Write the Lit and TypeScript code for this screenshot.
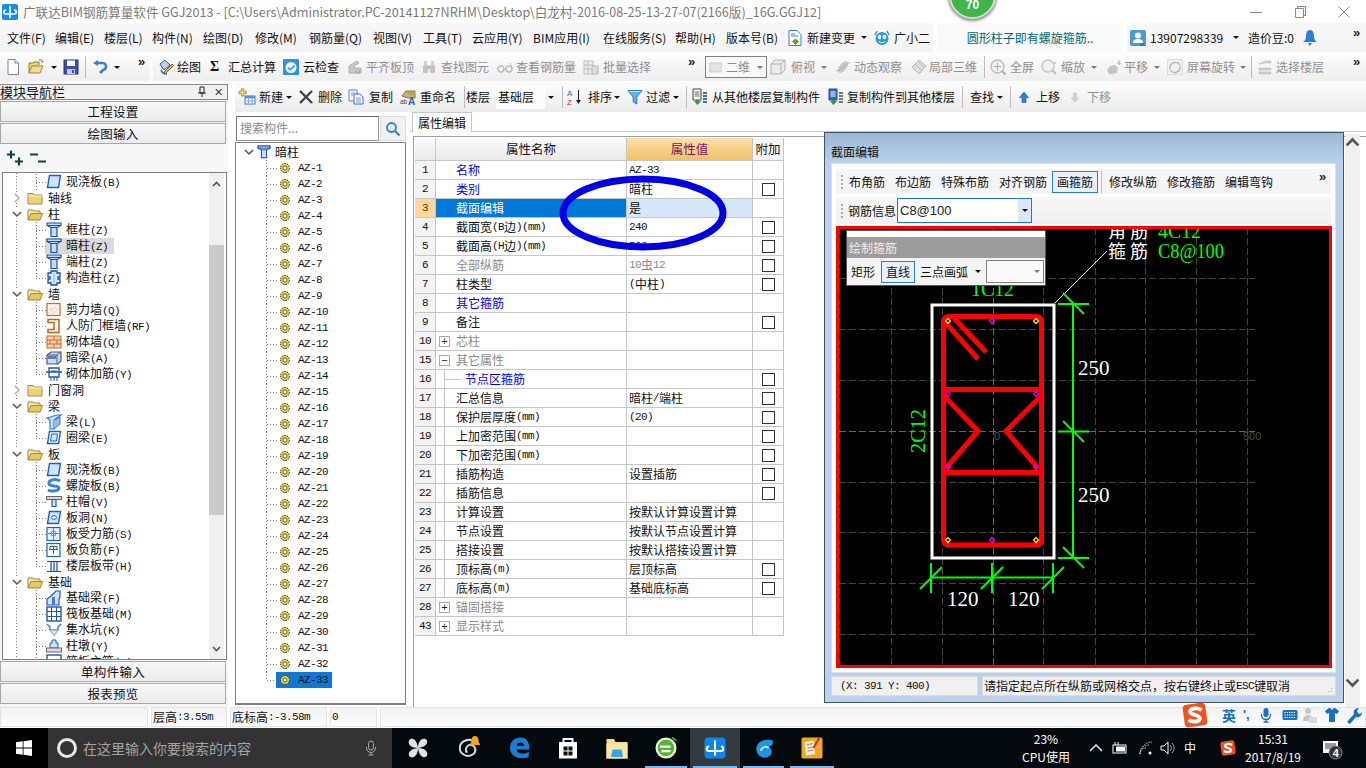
import { LitElement, html, css, svg, nothing, TemplateResult } from "lit";
import { customElement } from "lit/decorators.js";

type Cell = [number, string | TemplateResult];

const B = "#1c5fc0";
const ic = (c: unknown, cls = "") =>
  html`<svg class="i ${cls}" viewBox="0 0 16 16">${c}</svg>`;

/* ---------- toolbar icons ---------- */
const icons: Record<string, TemplateResult> = {
  new: ic(svg`<path d="M3 .5h7l3.5 3.5v11.5H3z" fill="#fff" stroke="#7d8794"/><path d="M10 .5V4h3.5" fill="#e8ebef" stroke="#7d8794"/>`),
  open: ic(svg`<path d="M1 14V4h4l1-1h5v3" fill="#eccf7e" stroke="#9a7a2a"/><path d="M1 14l3-7h11l-3 7z" fill="#f5dd93" stroke="#a5832f"/><path d="M11 1c2-.8 3.500 0 4 2l-1.500-.5" fill="none" stroke="#3b7d2e"/>`),
  save: ic(svg`<rect x="1" y="1" width="14" height="14" fill="#3f4fa8" stroke="#2b3580"/><rect x="4" y="1.500" width="8" height="5.500" fill="#fff"/><rect x="4" y="10" width="8" height="5" fill="#c5cbe6"/><rect x="9" y="11" width="2" height="3" fill="#3f4fa8"/>`),
  undo: ic(svg`<path d="M5 4h5a3.500 3.500 0 0 1 1 7l-3 3" fill="none" stroke="#3c80cf" stroke-width="2.600"/><path d="M1 4l5-3v6z" fill="#3c80cf"/>`),
  draw: ic(svg`<path d="M2 5l5-4 5 5-6 5z" fill="#bcd2ec" stroke="#36568f"/><path d="M6 13l8-8 1.500 1.500-8 8z" fill="#e4b94a" stroke="#7a6224"/><path d="M3 11c1 3 3 4 6 4" stroke="#2e66b8" fill="none" stroke-width="1.500"/>`),
  cloud: ic(svg`<rect x="0" y="0" width="16" height="16" rx="1" fill="#2f93dd"/><circle cx="8" cy="8.500" r="5.500" fill="#eaf5fd"/><path d="M5 8.500l2.200 2.200L11.500 6.500" fill="none" stroke="#2f93dd" stroke-width="1.600"/>`),
  flat: ic(svg`<path d="M2 14V7l8-5 2 2-5 3v2h7v5z" fill="#c9c9c9" stroke="#b0b0b0"/><path d="M9 11v4M12 11v4" stroke="#9e9e9e"/>`),
  bino: ic(svg`<rect x="2" y="6" width="5" height="8" rx="1" fill="#c4c4c4"/><rect x="9" y="6" width="5" height="8" rx="1" fill="#c4c4c4"/><rect x="3" y="2" width="3" height="4" fill="#d4d4d4"/><rect x="10" y="2" width="3" height="4" fill="#d4d4d4"/><rect x="7" y="7" width="2" height="3" fill="#b4b4b4"/>`),
  glasses: ic(svg`<circle cx="4" cy="10" r="3" fill="none" stroke="#bbb" stroke-width="1.400"/><circle cx="12" cy="10" r="3" fill="none" stroke="#bbb" stroke-width="1.400"/><path d="M7 10h2M15 9L13 4" stroke="#bbb" fill="none"/>`),
  batch: ic(svg`<path d="M1 2h9v13H1zM1 6h9M1 10h9M5 2v13" fill="#eee" stroke="#bdbdbd"/><path d="M9 7h6v8H9z" fill="#ddd" stroke="#b5b5b5"/>`),
  box2d: ic(svg`<rect x="1" y="3" width="14" height="11" fill="#e4e4e4" stroke="#c4c4c4"/>`),
  cube: ic(svg`<path d="M1 5h10v10H1zM1 5l4-4h10v10l-4 4M11 5l4-4" fill="#ececec" stroke="#b0b0b0"/>`),
  orbit: ic(svg`<ellipse cx="8" cy="8" rx="3.500" ry="7" transform="rotate(40 8 8)" fill="#c6c6c6"/><path d="M1 12C5 11 11 7 15 3" stroke="#b0b0b0" fill="none"/>`),
  part3d: ic(svg`<path d="M8 1l7 6-7 8-7-7z" fill="#e0e0e0" stroke="#b4b4b4"/><path d="M4 5l7 7M8 3l5 6" stroke="#bcbcbc"/>`),
  full: ic(svg`<circle cx="7.500" cy="7.500" r="6.500" fill="#f3f3f3" stroke="#bdbdbd" stroke-width="1.400"/><path d="M7.500 3.500v8M3.500 7.500h8" stroke="#aaa"/><path d="M12 12l3.500 3.500" stroke="#aaa" stroke-width="2"/>`),
  zoom: ic(svg`<circle cx="7" cy="7" r="6" fill="#f0f0f0" stroke="#c8c8c8" stroke-width="1.400"/><path d="M11 11l4 4" stroke="#c0c0c0" stroke-width="2"/><path d="M13 4h2M14 3v2" stroke="#bbb"/>`),
  pan: ic(svg`<path d="M2 11l3-4 5-1 3 3-1 5-5 1H4z" fill="#c6c6c6"/><path d="M12 4h4M14 1v5" stroke="#b4b4b4"/>`),
  rotate: ic(svg`<rect x="0.500" y="0.500" width="15" height="15" fill="#f0f0f0" stroke="#ddd"/><path d="M3 10a5.500 5.500 0 0 1 10-4M13 7a5.500 5.500 0 0 1-10 4" fill="none" stroke="#b4b4b4" stroke-width="1.300"/>`),
  selfloor: ic(svg`<path d="M2 5l6-3h6v2H8L5 5zM2 9h12v2H2zM2 13h12v2H2z" fill="#cfcfcf" stroke="#bcbcbc" stroke-width=".6"/>`),
  addnew: ic(svg`<path d="M3 1h3v3h3v3H6v3H3V7H0V4h3z" transform="translate(0 -1) scale(.8)" fill="#f1d86a" stroke="#a48a20"/><rect x="6" y="7" width="10" height="8" fill="#fff" stroke="#3e78c4"/><rect x="6" y="7" width="10" height="2.500" fill="#5a94dc"/><path d="M9.500 9.500v5M13 9.500v5M6 12h10" stroke="#7ca6da"/>`),
  del: ic(svg`<path d="M2 2l12 12M14 2L2 14" stroke="#444" stroke-width="2.400"/>`),
  copy: ic(svg`<path d="M1 1h8v11H1z" fill="#f4f8fd" stroke="#5a86bd"/><path d="M6 5h6l3 3v7H6z" fill="#fff" stroke="#3f6fb2"/><path d="M3 4h4M3 6h2M8 9h5M8 11h5M8 13h5" stroke="#6f95c6"/>`),
  rename: ic(svg`<path d="M2 7l4-5h9v7H8z" fill="#c9b266" stroke="#8a7a3a"/><path d="M7 3l5 3M10 2.500l4 3" stroke="#7aa55e"/><text x="0" y="15" font-size="6.500" font-family="Liberation Sans" fill="#444">ab</text><text x="8" y="16" font-size="10" font-weight="700" font-family="Liberation Sans" fill="#2360b8">A</text>`),
  sort: ic(svg`<text x="0" y="7" font-size="8" font-family="Liberation Sans" fill="#2d6cc0">A</text><text x="0" y="15.500" font-size="8" font-family="Liberation Sans" fill="#b03030">Z</text><path d="M11.500 1v13" stroke="#222"/><path d="M9 11l2.500 4 2.500-4z" fill="#222"/>`),
  filter: ic(svg`<path d="M1 1.500h14L9.800 8v7L6.200 13V8z" fill="#65b0ea" stroke="#2877c2"/><path d="M2.500 2.500h11" stroke="#cde6fa"/>`),
  fromfl: ic(svg`<path d="M1 0h8v11H1z" fill="#fff" stroke="#444"/><path d="M2.500 3h5M2.500 5h5M2.500 7h5" stroke="#666"/><path d="M11 4h4M11 7h4M11 10h4M11 13h4" stroke="#3b6fae" stroke-width="1.800"/><path d="M2 12h2v-1h3v1h2l-3.500 4z" fill="#2f9a3b"/>`),
  tofl: ic(svg`<path d="M1 0h8v11H1z" fill="#2f6fc6" stroke="#234f8f"/><path d="M2.500 3h5M2.500 5h5M2.500 7h5" stroke="#fff"/><path d="M11 4h4M11 7h4M11 10h4M11 13h4" stroke="#777" stroke-width="1.800"/><path d="M2 12h2v-1h3v1h2l-3.500 4z" fill="#2f9a3b"/>`),
  up: ic(svg`<path d="M8 3l4.500 5.500h-2.500v5H6v-5H3.500z" fill="#2e7fd6" stroke="#1c5fa8" stroke-width=".6"/>`),
  down: ic(svg`<path d="M8 14l4.500-5.500h-2.500v-5H6v5H3.500z" fill="#cfcfcf"/>`),
  doc: ic(svg`<path d="M2 .5h8l4 4v11H2z" fill="#fff" stroke="#3b7fd0"/><path d="M4 4h4M4 6h7" stroke="#3b7fd0"/><path d="M8.500 8.500l3.500 3-3.500 3.500-3.500-3.500z" fill="#5aa52a"/>`),
  gxe: ic(svg`<circle cx="8" cy="8.500" r="6.500" fill="#2a9be6"/><path d="M1 5L3 1M15 5l-2-4" stroke="#2a9be6" stroke-width="1.500"/><ellipse cx="5.500" cy="7" rx="1.800" ry="2.200" fill="#fff"/><ellipse cx="10.500" cy="7" rx="1.800" ry="2.200" fill="#fff"/><path d="M5 11.500c2 1.500 4 1.500 6 0" stroke="#fff" fill="none"/>`),
  user: ic(svg`<rect width="16" height="16" rx="2" fill="#4d9ad8"/><path d="M10 16V9l6 7z" fill="#3677ab"/><circle cx="8" cy="5.500" r="3" fill="#fff"/><path d="M3 13c0-3 2-4 5-4s5 1 5 4z" fill="#fff"/>`),
  bell: ic(svg`<path d="M8 0c3 0 4 3 4 6 0 3 1 5 3 6H1c2-1 3-3 3-6 0-3 1-6 4-6z" fill="#2a7fdc"/><path d="M6 13h4l-2 3z" fill="#2a7fdc"/>`),
};

/* ---------- tree icons ---------- */
const treeI: Record<string, TemplateResult> = {
  plate: ic(svg`<path d="M3.500 1.500h11l-2 12H1.500z" fill="#cfe2f9" stroke="${B}" stroke-width="1.400"/>`),
  ring: ic(svg`<path d="M3.500 1.500h11l-2 12H1.500z" fill="#fff" stroke="${B}" stroke-width="1.400"/><path d="M5.500 4h6l-1 7h-6z" fill="#d5e5f9" stroke="${B}"/>`),
  tcol: ic(svg`<path d="M1 1h14v2.500l-4 2v9H5v-9l-4-2z" fill="#c4dbf6" stroke="#1b4fa5" stroke-width="1.200"/><path d="M1 3.500h14M5 5.500h6" stroke="#1b4fa5"/>`),
  gz: ic(svg`<path d="M5 1h6v2h3v4h-2v2h2v4h-3v2H5v-2H2V9h2V7H2V3h3z" fill="#dbe7f7" stroke="#1b4fa5" stroke-width="1.300"/><path d="M8 3v10" stroke="#8fb0dc"/>`),
  shear: ic(svg`<rect x="1" y="1.500" width="13" height="12" fill="#faf3ec" stroke="#c96a25" stroke-width="1.200"/><path d="M3 11l7-6M3 8l4-3M6 12l6-5" stroke="#aaa" stroke-dasharray="1 1.500"/>`),
  rf: ic(svg`<path d="M2 1.500h11v13H2v-3h6v-7H2z" fill="#fff" stroke="#c2611c" stroke-width="1.500"/>`),
  brick: ic(svg`<rect x="1" y="2" width="14" height="12" fill="#f8d3b4" stroke="#c96a25"/><path d="M1 6h14M1 10h14M8 2v4M4 6v4M11 6v4M8 10v4" stroke="#c96a25"/>`),
  cube: ic(svg`<path d="M1 5l4-3h10v9l-3 3H1z" fill="#cfd9e6" stroke="#3d5f8f" stroke-width="1.200"/><path d="M1 5h10v9M11 5l4-3" fill="none" stroke="#3d5f8f"/><rect x="2" y="6" width="8" height="3" fill="#5a7faf"/>`),
  frame: ic(svg`<path d="M3 2h10v9H3zM0 6h16" fill="#fff" stroke="#1f55b0" stroke-width="1.300"/><path d="M5 11v4M8 11v4M11 11v4M5 5h6" stroke="#1f55b0"/>`),
  beam: ic(svg`<path d="M1 4l10-3h4L8 6v9H4V6z" fill="#cfe2f9" stroke="#2e79cf" stroke-width="1.200"/><path d="M8 6l6-3v7l-6 5" fill="#8fbdee" stroke="#2e79cf"/>`),
  spiral: ic(svg`<path d="M14 3C9 0 2 2 3 6c1 3 10 1 10 4s-7 4-11 2" fill="none" stroke="#2e86dc" stroke-width="3"/>`),
  cap: ic(svg`<rect x="0.500" y="2.500" width="15" height="3" fill="#d8d8d8" stroke="#666"/><path d="M6 5.500h4v7H6z" fill="#cfe2f9" stroke="${B}" stroke-width="1.200"/>`),
  hole: ic(svg`<path d="M3.500 1.500h11l-2 12H1.500z" fill="#cfe2f9" stroke="${B}" stroke-width="1.400"/><ellipse cx="8" cy="7.500" rx="2.500" ry="1.800" fill="#fff" stroke="${B}"/>`),
  srebar: ic(svg`<rect x="1" y="1.500" width="13" height="13" fill="#e6f0fb" stroke="${B}" stroke-width="1.200"/><path d="M7.500 2v12M2 7.500h11" stroke="#4f8bd4"/><circle cx="7.500" cy="7.500" r="2.500" fill="none" stroke="#4f8bd4"/>`),
  nrebar: ic(svg`<rect x="1" y="1.500" width="13" height="13" fill="#fff" stroke="${B}" stroke-width="1.200"/><path d="M3 7.500h9M7.500 4v8M4 4.500h7M4 4.500v3M11 4.500v3" fill="none" stroke="${B}"/>`),
  band: ic(svg`<path d="M1 3.500h14M1 13.500h14" stroke="#444"/><path d="M5 3.500v10M11 3.500v10M8 3.500v10" stroke="${B}" stroke-width="1.300"/>`),
  fbeam: ic(svg`<path d="M1 15V9l4-3 5-5h4v6L13 9v6z" fill="#cfe2f9" stroke="#1f55b0" stroke-width="1.200"/><path d="M6 15V7h3v8" fill="#3f7fcf"/>`),
  raft: ic(svg`<rect x="1" y="1" width="14" height="14" fill="#fff" stroke="#1f55b0" stroke-width="1.400"/><path d="M1 5.500h14M1 10.500h14M5.500 1v14M10.500 1v14" stroke="#1f55b0"/>`),
  pit: ic(svg`<path d="M1 2l3 3v3h8V5l3-3" fill="none" stroke="#2e79cf" stroke-width="1.400"/><path d="M4 8l4 6 4-6z" fill="#cfe2f9" stroke="#9ab"/>`),
  pier: ic(svg`<path d="M6 2h4v3h2v5H4V5h2z" fill="#cfe2f9" stroke="${B}"/><rect x="0.500" y="10" width="15" height="4" fill="#ddd" stroke="#666"/>`),
  main: ic(svg`<rect x="1" y="1" width="14" height="14" fill="#fff" stroke="#1f55b0" stroke-width="1.400"/>`),
};
const folderClosed = ic(svg`<path d="M1 3.500h5l1 1.500h8v9H1z" fill="#f3d26f" stroke="#8d8d6f"/><path d="M1 6h14" stroke="#fff2b8"/>`, "f");
const folderOpen = ic(svg`<path d="M1 14V4h5l1 1h6v3" fill="#f6e6ad" stroke="#9b8850"/><path d="M1 14l3-6.500h11.500L13 14z" fill="#eec65a" stroke="#9b8850"/>`, "f");

const nav: [string, string, string][] = [
  ["l", "plate", "现浇板(B)"], ["c", "", "轴线"], ["o", "", "柱"],
  ["l", "tcol", "框柱(Z)"], ["s", "tcol", "暗柱(Z)"], ["l", "tcol", "端柱(Z)"], ["e", "gz", "构造柱(Z)"],
  ["o", "", "墙"],
  ["l", "shear", "剪力墙(Q)"], ["l", "rf", "人防门框墙(RF)"], ["l", "brick", "砌体墙(Q)"], ["l", "cube", "暗梁(A)"], ["e", "frame", "砌体加筋(Y)"],
  ["c", "", "门窗洞"], ["o", "", "梁"],
  ["l", "beam", "梁(L)"], ["e", "ring", "圈梁(E)"],
  ["o", "", "板"],
  ["l", "plate", "现浇板(B)"], ["l", "spiral", "螺旋板(B)"], ["l", "cap", "柱帽(V)"], ["l", "hole", "板洞(N)"], ["l", "srebar", "板受力筋(S)"], ["l", "nrebar", "板负筋(F)"], ["e", "band", "楼层板带(H)"],
  ["o", "", "基础"],
  ["l", "fbeam", "基础梁(F)"], ["l", "raft", "筏板基础(M)"], ["l", "pit", "集水坑(K)"], ["l", "pier", "柱墩(Y)"], ["l", "main", "筏板主筋(R)"],
];

type Row = { n: number; name: string; v?: string; cb?: boolean; k?: string; exp?: string; child?: boolean; sel?: boolean };
const rows: Row[] = [
  { n: 1, name: "名称", v: "AZ-33", k: "blue" },
  { n: 2, name: "类别", v: "暗柱", k: "blue", cb: true },
  { n: 3, name: "截面编辑", v: "是", sel: true },
  { n: 4, name: "截面宽(B边)(mm)", v: "240", cb: true },
  { n: 5, name: "截面高(H边)(mm)", v: "500", cb: true },
  { n: 6, name: "全部纵筋", v: "10虫12", k: "gray", cb: true },
  { n: 7, name: "柱类型", v: "(中柱)", cb: true },
  { n: 8, name: "其它箍筋", k: "blue" },
  { n: 9, name: "备注", cb: true },
  { n: 10, name: "芯柱", k: "gray", exp: "+" },
  { n: 15, name: "其它属性", k: "gray", exp: "−" },
  { n: 16, name: "节点区箍筋", k: "blue", child: true, cb: true },
  { n: 17, name: "汇总信息", v: "暗柱/端柱", child: true, cb: true },
  { n: 18, name: "保护层厚度(mm)", v: "(20)", child: true, cb: true },
  { n: 19, name: "上加密范围(mm)", child: true, cb: true },
  { n: 20, name: "下加密范围(mm)", child: true, cb: true },
  { n: 21, name: "插筋构造", v: "设置插筋", child: true, cb: true },
  { n: 22, name: "插筋信息", child: true, cb: true },
  { n: 23, name: "计算设置", v: "按默认计算设置计算", child: true },
  { n: 24, name: "节点设置", v: "按默认节点设置计算", child: true },
  { n: 25, name: "搭接设置", v: "按默认搭接设置计算", child: true },
  { n: 26, name: "顶标高(m)", v: "层顶标高", child: true, cb: true },
  { n: 27, name: "底标高(m)", v: "基础底标高", child: true, cb: true },
  { n: 28, name: "锚固搭接", k: "gray", exp: "+" },
  { n: 43, name: "显示样式", k: "gray", exp: "+" },
];

/* simulated SimSun: half-width latin is 6px wide */
const t = (s: string) =>
  s.split(/([\x20-\x7e]+)/).map((p, i) => (i % 2 ? html`<span class="l">${p}</span>` : p));

function cellContent(c: string | TemplateResult) {
  if (typeof c !== "string") return c;
  if (c.startsWith("i:")) return icons[c.slice(2)];
  if (c === "v") return html`<span class="caret"></span>`;
  if (c === "gv") return html`<span class="caret g"></span>`;
  if (c === "|") return html`<span class="sep"></span>`;
  if (c === ">>") return html`<span class="more">»</span>`;
  if (c === ":") return html`<span class="grip"></span>`;
  if (c.startsWith("~")) return html`<span class="dis">${c.slice(1)}</span>`;
  return c;
}
function strip(start: number, end: number, cells: Cell[]) {
  return html`<span class="c" style="width:${cells[0][0] - start}px"></span>${cells.map(
    ([x, c], i) => html`<span class="c" style="width:${(i + 1 < cells.length ? cells[i + 1][0] : end) - x}px">${cellContent(c)}</span>`
  )}`;
}

@customElement("app-root")
export class AppRoot extends LitElement {
  static styles = css`
    :host { display: block; position: relative; width: 1366px; height: 768px; overflow: hidden; background: #fff;
      font: 12px/16px "Noto Sans CJK SC", "Liberation Sans", sans-serif; color: #111; }
    .i { width: 16px; height: 16px; flex: none; display: block; overflow: visible; }
    .c { flex: none; display: flex; align-items: center; white-space: nowrap; height: 100%; }
    .l { font: 11px/16px "Liberation Mono", monospace; letter-spacing: -.6px; }
    .caret { width: 0; height: 0; border: 3px solid transparent; border-top: 3px solid #111; border-bottom: 0; }
    .caret.g { border-top-color: #777; }
    .sep { width: 1px; height: 22px; background: #bcbcbc; }
    .more { font: 700 13px/12px "Liberation Sans", sans-serif; margin-top: -10px; color: #222; }
    .grip { width: 2px; height: 14px; background: repeating-linear-gradient(#aaa 0 2px, transparent 2px 4px); }
    .dis { color: #8f8f8f; }

    .title { height: 23px; display: flex; align-items: center; }
    .title .txt { color: #7a7a7a; font-size: 12.600px; white-space: nowrap; margin-left: 5px; }
    .logo { width: 16px; height: 16px; margin-left: 2px; flex: none; border-radius: 2px; background: #1a8cf0; color: #fff; }
    .win { margin-left: auto; display: flex; flex: none; }
    .win span { width: 44px; height: 23px; display: flex; align-items: center; justify-content: center; }
    .win svg { width: 14px; height: 14px; }

    .menu { height: 29px; display: flex; background: #fff; }
    .menu .a, .menu .b, .menu .m { display: flex; height: 100%; background: linear-gradient(#f8f8f8, #f3f3f3); }
    .menu .m { background: #fafafa; margin: 0 4px; justify-content: center; align-items: center; width: 186px; color: #006a6f; flex: none; }
    .tb { height: 32px; display: flex; background: #fbfbfb; padding-top: 1px; box-sizing: border-box; }
    .grp { display: flex; height: 28px; background: linear-gradient(#fdfdfd, #eeeeee); flex: none; }
    .combo2d { position: relative; display: flex; height: 22px; width: 62px; border: 1px solid #808080; box-sizing: border-box; align-items: center; background: #f8f8f8; }
    .combo2d .i { width: 13px; margin: 0 4px 0 3px; }
    .combo2d .caret { margin-left: 7px; }

    .body { height: 623px; display: flex; }
    .nav { width: 228px; flex: none; display: flex; flex-direction: column; background: #f4f4f4; padding-bottom: 3px; box-sizing: border-box; }
    .navh { height: 16px; flex: none; border: 1px solid #8a8a8a; border-width: 1px 1px 1px 0; background: #f0f0f0; display: flex; align-items: center; box-sizing: border-box; font-size: 13px; }
    .navh .pin { margin-left: auto; width: 16px; display: flex; justify-content: center; }
    .navh .x { width: 17px; text-align: center; color: #333; font: 14px/14px "Liberation Sans", sans-serif; }
    .btn { height: 21px; flex: none; margin: 1px 2px 0 0; border: 1px solid #a8a8a8; background: linear-gradient(#f7f7f7, #ececec); display: flex; align-items: center; justify-content: center; box-sizing: border-box; font-size: 12.500px; letter-spacing: .3px; }
    .navtools { height: 28px; flex: none; display: flex; gap: 7px; align-items: center; padding-left: 7px; background: #f7f7f7; }
    .tree { flex: 1; min-height: 0; margin: 0 1px 0 2px; border: 1px solid #808080; background: #fff; display: flex; overflow: hidden; box-sizing: border-box; }
    .troot { flex: 1; overflow: hidden; padding-top: 1px; min-width: 0; background: repeating-linear-gradient(#777 0 1px, transparent 1px 3px) 13px 0 / 1px 100% no-repeat #fff; }
    .tr { height: 16px; display: flex; align-items: center; position: relative; white-space: nowrap; }
    .tr .chev { width: 10px; height: 10px; margin-left: 9px; flex: none; background: #fff; }
    .tr .f { margin-left: 5px; width: 16px; }
    .tr .lab { margin-left: 5px; }
    .tr.leaf { padding-left: 43px; }
    .tr.leaf .lab { margin-left: 3px; padding: 0 1px; }
    .tr.leaf::before { content: ""; position: absolute; left: 33px; top: 0; bottom: 0; width: 1px; background: repeating-linear-gradient(#777 0 1px, transparent 1px 3px); }
    .tr.leaf.end::before { bottom: 8px; }
    .tr.leaf::after { content: ""; position: absolute; left: 33px; width: 10px; top: 8px; height: 1px; background: repeating-linear-gradient(90deg, #777 0 1px, transparent 1px 3px); }
    .tr.sel { background: linear-gradient(90deg, transparent 42px, #dadada 42px, #dadada 111px, transparent 111px); }
    .sb { width: 15px; flex: none; margin-right: 2px; background: #f0f0f0; position: relative; display: flex; flex-direction: column; }
    .sb .ar { height: 22px; display: flex; align-items: center; justify-content: center; flex: none; }
    .sb svg { width: 9px; height: 6px; }
    .sb .th { background: #c9c9c9; flex: none; }
    .sb .sp { flex: none; }

    .work { margin-left: 7px; width: 1131px; flex: none; display: flex; flex-direction: column; }
    .row3 { height: 28px; flex: none; display: flex; background: linear-gradient(#fcfcfc, #ebebeb); padding-bottom: 2px; box-sizing: border-box; }
    .combo3 { background: #fdfdfd; height: 24px; display: flex; align-items: center; width: 49px; padding-left: 2px; box-sizing: border-box; }
    .panes { flex: 1; min-height: 0; display: flex; }
    .list { width: 171px; flex: none; display: flex; flex-direction: column; padding-top: 4px; margin-right: 4px; }
    .search { height: 25px; flex: none; display: flex; gap: 1px; margin-left: 1px; }
    .search .in { width: 143px; box-sizing: border-box; border: 1px solid #999; border-top-color: #666; border-left-color: #777; color: #8a8a8a; padding-left: 3px; line-height: 22px; }
    .search .go { flex: 1; border: 1px solid #ddd; background: #f0f0f0; display: flex; align-items: center; justify-content: center; }
    .lbox { flex: 1; min-height: 0; margin: 1px 0 2px; border: 1px solid #808080; border-bottom-width: 2px; padding-top: 1px; overflow: hidden; background: #fff; }
    .az { height: 16px; display: flex; align-items: center; position: relative; }
    .az.root .ch { margin-left: 8px; width: 10px; height: 10px; }
    .az.root .i { width: 14px; height: 14px; margin-left: 3px; }
    .az.root .lab { margin-left: 4px; }
    .az.it { padding-left: 43px; }
    .az.it::before { content: ""; position: absolute; left: 30px; top: 0; bottom: 0; width: 1px; background: repeating-linear-gradient(#777 0 1px, transparent 1px 3px); }
    .az.it.end::before { bottom: 8px; }
    .az.it::after { content: ""; position: absolute; left: 31px; width: 12px; top: 8px; height: 1px; background: repeating-linear-gradient(90deg, #777 0 1px, transparent 1px 3px); }
    .az.it svg { width: 12px; height: 12px; flex: none; }
    .az .n { margin-left: 7px; }
    .az.cur { background: linear-gradient(90deg, transparent 40px, #0f78d4 40px, #0f78d4 96px, transparent 96px); }

    .prop { flex: 1; min-width: 0; display: flex; flex-direction: column; }
    .tabs { height: 20px; flex: none; display: flex; border-bottom: 1px solid #c8c8c8; padding-left: 2px; box-sizing: border-box; margin-top: 0; }
    .tab { width: 60px; height: 20px; background: #fff; border: 1px solid #c8c8c8; border-bottom: 0; display: flex; align-items: center; justify-content: center; box-sizing: border-box; }
    .pbody { flex: 1; min-height: 0; margin-top: 4px; display: flex; border: 1px solid #a0a0a0; border-width: 1px 0 0 1px; padding: 1px 0 0 1px; margin-left: 3px; }
    .tbl { width: 369px; flex: none; }
    .hr, .rw { display: grid; grid-template-columns: 21px 191px 126px 31px; }
    .hr { height: 23px; }
    .hr > div { display: flex; align-items: center; justify-content: center; background: linear-gradient(#fbfbfb, #e9e9e9); border: solid #c6c6c6; border-width: 0 1px 1px 0; box-sizing: border-box; font-size: 12.500px; }
    .hr .val { background: linear-gradient(#fbdfac, #f3c163); color: #7c1266; }
    .hr .add { background: #f5f5f5; }
    .rw { height: 19px; }
    .rw > div { border: solid #c6c6c6; border-width: 0 1px 1px 0; box-sizing: border-box; display: flex; align-items: center; white-space: nowrap; position: relative; }
    .rw .no { background: #f3f3f3; justify-content: center; font-family: "Liberation Mono", monospace; font-size: 11px; letter-spacing: -.6px; }
    .rw .nm { padding-left: 20px; }
    .rw .nm.sub { padding-left: 20px; }
    .rw .nm.blue { color: #0000f0; } .rw .nm.sub.blue { padding-left: 29px; }
    .rw .nm.gray, .rw .vl.gray { color: #8a8a8a; }
    .rw .vl { padding-left: 2px; }
    .rw .ad { justify-content: center; }
    .rw.on .no { background: #fdd899; color: #a01010; }
    .rw.on .nm { background: #0078d7; color: #fff; }
    .rw.on .vl { background: #d6e8f8; }
    .cb { width: 13px; height: 13px; border: 1px solid #333; box-sizing: border-box; background: #fff; }
    .exp { position: absolute; left: 3px; top: 4px; width: 11px; height: 11px; border: 1px solid #aaa; box-sizing: border-box; background: #fff; display: flex; align-items: center; justify-content: center; font: 11px/9px "Liberation Sans", sans-serif; color: #222; }
    .tl { position: absolute; left: 8px; top: 0; bottom: -1px; width: 1px; background: #c4c4c4; }
    .tl.h { bottom: auto; top: 9px; width: 17px; height: 1px; }
    .psb { margin-left: auto; width: 15px; flex: none; margin-right: 6px; background: #f0f0f0; display: flex; flex-direction: column; margin-top: -4px; }

    .status { height: 21px; display: flex; gap: 3px; background: #fff; box-sizing: border-box; padding-bottom: 1px; }
    .status div { flex: none; background: linear-gradient(#f2f2f2, #fbfbfb); border: 1px solid #e4e4e4; box-sizing: border-box; display: flex; align-items: center; padding-left: 1px; white-space: nowrap; }

    .task { height: 40px; display: flex; background: #03090d; color: #fff; }
    .st { width: 48px; background: #000; display: flex; align-items: center; justify-content: center; flex: none; }
    .st svg { width: 16px; height: 16px; }
    .se { width: 344px; background: #333; flex: none; display: flex; align-items: center; color: #a3a3a3; font-size: 14px; }
    .se .o { width: 20px; height: 20px; border: 3px solid #e8e8e8; border-radius: 50%; margin: 0 6px 0 9px; box-sizing: border-box; flex: none; }
    .se .mic { margin-left: auto; margin-right: 13px; }
    .slot { flex: none; display: flex; align-items: center; justify-content: center; height: 100%; position: relative; }
    .slot .i { width: 24px; height: 24px; }
    .slot.run::after { content: ""; position: absolute; left: 3px; right: 3px; bottom: 0; height: 2px; background: #78b8ea; }
    .slot.act { background: #333a40; }
    .tray { display: flex; height: 100%; flex: 1; }
    .clock { display: flex; flex-direction: column; align-items: center; line-height: 18px; }
    .si { display: block; overflow: visible; }

    .dlg { position: absolute; left: 824px; top: 132px; width: 520px; height: 571px; box-sizing: border-box; border: 1px solid #3f5566; background: #b9d1ea; display: flex; flex-direction: column; }
    .dt { height: 30px; flex: none; background: linear-gradient(#9bb8d6, #b9d2ea); padding: 0 0 3px 6px; box-sizing: border-box; display: flex; align-items: flex-end; }
    .db { width: 505px; height: 510px; flex: none; margin-left: 6px; background: #fff; padding: 5px 4px 0 4px; box-sizing: border-box; border: 1px solid #d9e3ee; display: flex; flex-direction: column; }
    .t1 { height: 25px; flex: none; background: #f5f5f5; display: flex; }
    .t2 { height: 27px; flex: none; margin-top: 3px; background: linear-gradient(#f7f7f7, #f0f0f0); display: flex; }
    .box { border: 1px solid #2f80c4; background: #e8f1fa; height: 22px; padding: 0 4px; display: flex; align-items: center; box-sizing: border-box; }
    .cmb { width: 135px; height: 25px; border: 1px solid #1d78d0; box-sizing: border-box; background: #fff; display: flex; align-items: center; padding-left: 2px; font: 13px/16px "Liberation Sans", sans-serif; color: #222; }
    .cmb .dd { margin-left: auto; width: 13px; height: 100%; background: #dbe7f3; display: flex; align-items: center; justify-content: center; }
    .canvas { position: relative; height: 442px; width: 496px; flex: none; margin-top: 2px; background: #000; overflow: hidden; }
    .canvas svg.cad { display: block; width: 496px; height: 442px; }
    .flt { position: absolute; left: 10px; top: 4px; width: 200px; box-sizing: border-box; border: 1px solid #555; background: #fff; padding-top: 6px; }
    .flt .h { height: 21px; background: #9c9c9c; color: #eee; padding-left: 2px; display: flex; align-items: center; }
    .flt .b { height: 27px; background: #f4f4f4; display: flex; }
    .flt .cb2 { width: 58px; height: 23px; border: 1px solid #808080; background: #fafafa; box-sizing: border-box; display: flex; align-items: center; justify-content: flex-end; padding-right: 3px; }
    .ds { height: 20px; flex: none; display: flex; gap: 4px; margin: 3px 0 0 6px; width: 505px; }
    .ds div { background: #f0f0f0; border: 1px solid #dcdcdc; box-sizing: border-box; display: flex; align-items: center; white-space: nowrap; }
    .ds .a { width: 147px; padding-left: 8px; }
    .ds .z { flex: 1; padding-left: 1px; position: relative; }
    .ds .dots { position: absolute; right: 1px; bottom: 1px; width: 10px; height: 10px; background: radial-gradient(#aaa 40%, transparent 45%) 0 0 / 3px 3px; border: 0; clip-path: polygon(100% 0, 100% 100%, 0 100%); }

    .oval { position: absolute; left: 556px; top: 172px; width: 176px; height: 84px; pointer-events: none; }
    .score { position: absolute; left: 949px; top: -28px; width: 47px; height: 47px; box-sizing: border-box; border-radius: 50%; background: #3fb54a; border: 2px solid #d6dcd6; box-shadow: 0 1px 3px 1px rgba(0,0,0,.45); color: #fff; display: flex; align-items: flex-end; justify-content: center; font: 700 12px/16px "Liberation Sans", sans-serif; padding-bottom: 4px; }
    .ime { position: absolute; left: 1182px; top: 702px; height: 26px; width: 184px; display: flex; align-items: center; color: #1a6fc2; font-weight: 700; font-size: 14px; }
  `;

  private cadText() {
    const W = "#fff", G = "#00ff00";
    const serif = "Liberation Serif";
    return svg`
      <g font-family="${serif}" font-size="21">
        <text x="971" y="296" fill="${G}" textLength="43" lengthAdjust="spacingAndGlyphs">1C12</text>
        <text x="1108" y="238" fill="${W}" font-family="Noto Sans CJK SC" font-size="18" textLength="40">角筋</text>
        <text x="1158" y="238" fill="${G}" textLength="43" lengthAdjust="spacingAndGlyphs">4C12</text>
        <text x="1108" y="258" fill="${W}" font-family="Noto Sans CJK SC" font-size="18" textLength="40">箍筋</text>
        <text x="1158" y="258" fill="${G}" textLength="66" lengthAdjust="spacingAndGlyphs">C8@100</text>
        <text x="1078" y="375" fill="${W}">250</text>
        <text x="1078" y="502" fill="${W}">250</text>
        <text x="947" y="606" fill="${W}">120</text>
        <text x="1008" y="606" fill="${W}">120</text>
        <text x="0" y="0" fill="${G}" transform="translate(925 453) rotate(-90)" textLength="44" lengthAdjust="spacingAndGlyphs">2C12</text>
      </g>
      <text x="994" y="440" fill="#555" font-family="Liberation Sans" font-size="11">0</text>
      <text x="1243" y="440" fill="#444" font-family="Liberation Sans" font-size="11">500</text>`;
  }

  private cad() {
    const hy = [278, 329, 380, 431, 482, 532, 583, 634];
    const vx = [839, 891, 942, 993, 1043, 1095, 1145, 1196, 1247];
    const nodes: [number, number, string][] = [
      [948, 321, "#ffe600"], [1036, 321, "#ffe600"], [948, 540, "#ffe600"], [1036, 540, "#ffe600"],
      [992, 321, "#e000e0"], [948, 394, "#e000e0"], [1036, 394, "#e000e0"], [948, 467, "#e000e0"], [1036, 467, "#e000e0"], [992, 540, "#e000e0"],
    ];
    const slash = (x: number, y: number, dx: number, dy: number) => svg`<path d="M${x} ${y}l${dx} ${dy}"/>`;
    return html`<svg class="cad" viewBox="836 226 496 442">
      <g stroke="#444" stroke-dasharray="7 3" fill="none">
        ${hy.map((y) => svg`<path d="M839 ${y + 0.5}H1255"/>`)}
        ${vx.map((x) => svg`<path d="M${x + 0.5} 228V667"/>`)}
      </g>
      <path d="M839 431.500H1255M993.500 228V667" stroke="#666" stroke-dasharray="7 3" fill="none"/>
      <path d="M1055 303L1107 251" stroke="#fff" fill="none"/>
      <rect x="932" y="305" width="122" height="253" fill="none" stroke="#fff" stroke-width="3"/>
      <g fill="none" stroke="#f00" stroke-width="5">
        <path d="M943.500 322Q943.500 316.500 949 316.500H1036Q1041.500 316.500 1041.500 322V539Q1041.500 545 1036 545H949Q943.500 545 943.500 539Z"/>
        <path d="M943.500 389.500H1041.500M943.500 472.500H1041.500"/>
        <path d="M945 322L978 359M954 318L986 352"/>
        <path d="M945 397L978 431L946 468M1040 397L1006 431L1038 468"/>
      </g>
      <g fill="none" stroke="#00ff00" stroke-width="2">
        <path d="M1073 303V558M1058 304H1089M1058 431.500H1089M1058 558H1089"/>
        ${slash(1063, 293, 21, 21)}${slash(1063, 421, 21, 21)}${slash(1063, 547, 21, 21)}
        <path d="M931 577.500H1053M931 563V593M992 563V593M1053 563V593"/>
        ${slash(920, 589, 22, -22)}${slash(981, 589, 22, -22)}${slash(1042, 589, 22, -22)}
      </g>
      ${nodes.map(([x, y, c]) => svg`<path d="M${x} ${y - 2.500}L${x + 2.500} ${y}L${x} ${y + 2.500}L${x - 2.500} ${y}Z" fill="none" stroke="${c}" stroke-width="1.300"/>`)}
      ${this.cadText()}
      <rect x="837.500" y="227.500" width="493" height="439" fill="none" stroke="#f00" stroke-width="3"/>
    </svg>`;
  }

  private scroll(top: number, thumb: number, bottom: number) {
    return html`<div class="ar"><svg viewBox="0 0 9 6"><path d="M1 5l3.500-3.500L8 5" fill="none" stroke="#555" stroke-width="1.600"/></svg></div>
      <div class="sp" style="height:${top}px"></div>
      <div class="th" style="height:${thumb}px"></div>
      <div class="sp" style="height:${bottom}px"></div>
      <div class="ar"><svg viewBox="0 0 9 6"><path d="M1 1l3.500 3.500L8 1" fill="none" stroke="#555" stroke-width="1.600"/></svg></div>`;
  }

  private chev(open: boolean) {
    return open
      ? html`<svg class="chev" viewBox="0 0 10 10"><path d="M1 3l4 4 4-4" fill="none" stroke="#555" stroke-width="1.500"/></svg>`
      : html`<svg class="chev" viewBox="0 0 10 10"><path d="M3 1l4 4-4 4" fill="none" stroke="#aaa" stroke-width="1.500"/></svg>`;
  }

  private navTree() {
    return nav.map(([k, ico, label]) =>
      k === "c" || k === "o"
        ? html`<div class="tr">${this.chev(k === "o")}${k === "o" ? folderOpen : folderClosed}<span class="lab">${t(label)}</span></div>`
        : html`<div class="tr leaf ${k === "e" ? "end" : ""} ${k === "s" ? "sel" : ""}">${treeI[ico]}<span class="lab">${t(label)}</span></div>`
    );
  }

  private azList() {
    const gear = html`<svg viewBox="0 0 12 12"><circle cx="6" cy="6" r="4.500" fill="#e6d23c" stroke="#222" stroke-dasharray="1.500 1"/><circle cx="6" cy="6" r="2" fill="#fff7b8" stroke="#333" stroke-width=".7"/></svg>`;
    const items = Array.from({ length: 33 }, (_, i) => i + 1);
    return html`<div class="az root"><svg class="ch" viewBox="0 0 10 10"><path d="M1 3l4 4 4-4" fill="none" stroke="#555" stroke-width="1.500"/></svg>${treeI.tcol}<span class="lab">暗柱</span></div>
      ${items.map((n) => html`<div class="az it ${n === 33 ? "end cur" : ""}">${gear}<span class="n l">AZ-${n}</span></div>`)}`;
  }

  private table() {
    return rows.map(
      (r) => html`<div class="rw ${r.sel ? "on" : ""}">
        <div class="no">${r.n}</div>
        <div class="nm ${r.child ? "sub" : ""} ${r.k ?? ""}">
          ${r.exp ? html`<span class="exp">${r.exp}</span>` : nothing}
          ${r.child ? html`<span class="tl"></span>${r.k === "blue" ? html`<span class="tl h"></span>` : nothing}` : nothing}
          ${t(r.name)}
        </div>
        <div class="vl ${r.k === "gray" ? "gray" : ""}">${r.v ? t(r.v) : nothing}</div>
        <div class="ad">${r.cb ? html`<span class="cb"></span>` : nothing}</div>
      </div>`
    );
  }

  private taskbar() {
    const fan = ic(svg`<g fill="#e4e4e4"><path d="M8 8C3 8 1 5 2 3s5-2 6 5zM8 8c0-5 3-7 5-6s2 5-5 6zM8 8c5 0 7 3 6 5s-5 2-6-5zM8 8c0 5-3 7-5 6s-2-5 5-6z"/></g>`);
    const spiral = ic(svg`<path d="M13 5C10 1 3 2 2 7c-1 5 5 8 9 5 3-3 0-7-3-6-2 1-3 4-1 5" fill="none" stroke="#ddd" stroke-width="1.300"/><path d="M12 0c2 0 2.500 2 2.500 4l1 2h-7l1-2c0-2 .5-4 2.500-4z" fill="#f0a81e"/>`);
    const edge = ic(svg`<path fill-rule="evenodd" d="M2 8.500C2 3.500 5 1 9 1c4 0 6 3 6 8H6.500c.3 3 5 3.500 8 1.500v3.500c-5 2-12.500.5-12.500-6zM6.500 6.500h5c0-3-5-3-5 0z" fill="#1a7cd6"/>`);
    const store = ic(svg`<path d="M2 4h12v11H2z" fill="#fff"/><path d="M5 4V2h6v2" fill="none" stroke="#fff" stroke-width="1.300"/><path d="M5 7h2.700v2.700H5zM8.300 7H11v2.700H8.300zM5 10.300h2.700V13H5zM8.300 10.300H11V13H8.300z" fill="#111"/>`);
    const folder = ic(svg`<path d="M1 2h5l1 2h8v11H1z" fill="#f3dc8a"/><rect x="1" y="5" width="14" height="10" fill="#f8e8a8"/><path d="M5 9h6l1 5H4z" fill="#37a3e0"/>`);
    const greeny = ic(svg`<circle cx="8" cy="8" r="7" fill="#e8f5d8"/><circle cx="8" cy="8" r="5.500" fill="#53b52f"/><path d="M4 7h7M5 10h6" stroke="#fff" stroke-width="1.500"/><path d="M12 1l3 2" stroke="#6fca3f"/>`);
    const tile = ic(svg`<rect x="1" y="1" width="14" height="14" rx="2.500" fill="#0e86ee"/><path d="M8 3v10M4 7c-2 0-2 3 0 3h8c2 0 2-3 0-3" fill="none" stroke="#fff" stroke-width="1.400"/>`);
    const gl = ic(svg`<path d="M14 3C7 1 2 5 3 10c1 4 6 6 9 3 2-2 1-5-1-6 2 0 3-1 3-4z" fill="#1f94e8"/><path d="M6 10a3 3 0 0 1 5-2" stroke="#bfe4ff" fill="none" stroke-width="1.300"/>`);
    const notes = ic(svg`<rect x="1" y="1" width="14" height="14" rx="1" fill="#f0a724"/><path d="M3 4l6-1 1 9-6 1z" fill="#f9efd8"/><path d="M4.500 6l4-1M5 8l4-.7M5 10l4-.7" stroke="#b99"/><path d="M13 1L9 8" stroke="#c03a1a" stroke-width="1.300"/>`);
    const slots: [number, TemplateResult, string][] = [
      [52, fan, ""], [50, spiral, ""], [50, edge, ""], [48, store, ""], [50, folder, ""], [48, greeny, "run"], [50, tile, "run act"], [47, gl, "run"], [50, notes, "run"],
    ];
    const sIcon = (w: number) => html`<svg class="si" style="width:${w}px;height:${w}px" viewBox="0 0 16 16"><rect x="1" y="1" width="14" height="14" rx="2" fill="#f0521e" transform="rotate(-8 8 8)"/><path d="M12 5C9 3 5 4 5 6s6 2 6 4-4 3-7 1" fill="none" stroke="#fff" stroke-width="2.200"/></svg>`;
    const smallIc = (c: unknown, w = 16) => html`<svg class="si" style="width:${w}px;height:${w}px" viewBox="0 0 16 16">${c}</svg>`;
    return html`<div class="task">
      <div class="st"><svg viewBox="0 0 16 16"><path d="M0 2.300L6.700 1.300V7.600H0zM7.500 1.200L16 0V7.600H7.500zM0 8.400H6.700V14.700L0 13.700zM7.500 8.400H16V16L7.500 14.800z" fill="#fff"/></svg></div>
      <div class="se"><span class="o"></span>在这里输入你要搜索的内容
        <svg class="mic i" viewBox="0 0 16 16"><rect x="5.500" y="1" width="5" height="9" rx="2.500" fill="none" stroke="#aaa"/><path d="M3.500 7v1a4.500 4.500 0 0 0 9 0V7M8 12.500V15M5.500 15h5" fill="none" stroke="#aaa"/></svg></div>
      ${slots.map(([w, ico, cls]) => html`<div class="slot ${cls}" style="width:${w}px">${ico}</div>`)}
      <div class="tray">${strip(839, 1366, [
        [1024, html`<div class="clock"><span>23%</span><span>CPU使用</span></div>`],
        [1090, smallIc(svg`<path d="M2 11l6-6 6 6" fill="none" stroke="#fff" stroke-width="1.300"/>`)],
        [1114, smallIc(svg`<rect x="1" y="5" width="13" height="8" fill="none" stroke="#fff"/><rect x="4" y="6.500" width="9" height="5" fill="#fff"/><path d="M3 5V2M6 5V2" stroke="#fff"/>`)],
        [1140, smallIc(svg`<path d="M2 14a12 12 0 0 1 12-12M2 14a9 9 0 0 1 9-9M2 14a6 6 0 0 1 6-6" fill="none" stroke="#ccc" stroke-dasharray="1.500 1"/><circle cx="12" cy="13" r="1.500" fill="#fff"/>`)],
        [1162, smallIc(svg`<path d="M1 6h3l4-4v12l-4-4H1z" fill="none" stroke="#fff"/><path d="M10 5a4 4 0 0 1 0 6M12 3a7 7 0 0 1 0 10" fill="none" stroke="#aaa"/>`)],
        [1186, html`<span>中</span>`],
        [1222, sIcon(16)],
        [1247, html`<div class="clock"><span>15:31</span><span>2017/8/19</span></div>`],
        [1325, smallIc(svg`<path d="M0 1h15v10H8l-2 2H0z" fill="#fff"/><path d="M2 4h11M2 6h11M2 8h11" stroke="#333"/><circle cx="12.500" cy="12.500" r="6.500" fill="#333" stroke="#888"/><text x="9.800" y="16.500" font-size="11" font-weight="700" fill="#fff" font-family="Liberation Sans">4</text>`, 16)],
      ])}</div>
    </div>`;
  }

  render() {
    const btmArrow = html`<svg class="i" viewBox="0 0 16 16"><circle cx="6.500" cy="6.500" r="4.500" fill="#e8f2fb" stroke="#2f7fd0" stroke-width="1.800"/><path d="M10 10l4.500 4.500" stroke="#2f7fd0" stroke-width="2"/></svg>`;
    const sLogo = html`<svg class="si" style="width:26px;height:26px" viewBox="0 0 16 16"><rect x="1" y="1" width="14" height="14" rx="2.500" fill="#f2521c" transform="rotate(-8 8 8)"/><path d="M12 5C9 3 5 4 5 6s6 2 6 4-4 3-7 1" fill="none" stroke="#fff" stroke-width="2.400"/></svg>`;
    return html`
      <div class="title">
        <svg class="logo" viewBox="0 0 16 16"><path d="M8 2v12M4 6c-3 0-3 4 0 4h8c3 0 3-4 0-4" fill="none" stroke="#fff" stroke-width="1.600"/></svg>
        <span class="txt">广联达BIM钢筋算量软件 GGJ2013 - [C:\\Users\\Administrator.PC-20141127NRHM\\Desktop\\白龙村-2016-08-25-13-27-07(2166版)_16G.GGJ12]</span>
        <div class="win">
          <span><svg viewBox="0 0 14 14"><path d="M1 7.500h12" stroke="#888"/></svg></span>
          <span><svg viewBox="0 0 14 14"><path d="M2.500 3.500h8v9h-8zM4.500 3.500v-2h8v9h-2" fill="none" stroke="#888"/></svg></span>
          <span><svg viewBox="0 0 14 14"><path d="M1.500 1.500l11 11M12.500 1.500l-11 11" stroke="#888"/></svg></span>
        </div>
      </div>

      <div class="menu">
        <div class="a" style="width:933px">${strip(0, 933, [
          [7, "文件(F)"], [55, "编辑(E)"], [104, "楼层(L)"], [152, "构件(N)"], [203, "绘图(D)"], [255, "修改(M)"], [309, "钢筋量(Q)"],
          [373, "视图(V)"], [423, "工具(T)"], [472, "云应用(Y)"], [533, "BIM应用(I)"], [603, "在线服务(S)"], [675, "帮助(H)"], [726, "版本号(B)"],
          [787, "i:doc"], [807, "新建变更"], [861, "v"], [874, "i:gxe"], [894, "广小二"],
        ])}</div>
        <div class="m">圆形柱子即有螺旋箍筋..</div>
        <div class="b" style="width:239px">${strip(1127, 1366, [
          [1130, "i:user"], [1150, "13907298339"], [1233, "v"], [1248, "造价豆:0"], [1302, "i:bell"], [1353, ">>"],
        ])}</div>
      </div>

      <div class="tb">
        <div class="grp" style="width:149px">${strip(0, 149, [
          [5, "i:new"], [28, "i:open"], [51, "v"], [63, "i:save"], [85, "|"], [92, "i:undo"], [114, "v"], [138, ">>"],
        ])}</div>
        <div class="grp" style="width:549px;margin-left:4px">${strip(153, 702, [
          [158, "i:draw"], [177, "绘图"], [210, html`<span style="font:700 14px/16px 'Liberation Serif',serif">Σ</span>`], [228, "汇总计算"],
          [283, "i:cloud"], [303, "云检查"], [347, "i:flat"], [366, "~平齐板顶"], [421, "i:bino"], [441, "~查找图元"],
          [497, "i:glasses"], [516, "~查看钢筋量"], [583, "i:batch"], [603, "~批量选择"], [688, ">>"],
        ])}</div>
        <div class="grp" style="width:664px;margin-left:0">${strip(702, 1366, [
          [705, html`<span class="combo2d">${icons.box2d}<span class="dis">二维</span><span class="caret g"></span></span>`],
          [770, "i:cube"], [791, "~俯视"], [821, "gv"], [835, "i:orbit"], [854, "~动态观察"], [911, "i:part3d"], [929, "~局部三维"],
          [984, "|"], [990, "i:full"], [1010, "~全屏"], [1041, "i:zoom"], [1061, "~缩放"], [1091, "gv"],
          [1105, "i:pan"], [1124, "~平移"], [1154, "gv"], [1167, "i:rotate"], [1187, "~屏幕旋转"], [1240, "gv"],
          [1251, "|"], [1257, "i:selfloor"], [1276, "~选择楼层"], [1353, ">>"],
        ])}</div>
      </div>

      <div class="body">
        <aside class="nav">
          <div class="navh">模块导航栏
            <span class="pin"><svg width="10" height="12" viewBox="0 0 10 12"><path d="M3 1h4v6H3zM1 7h8M5 7v4" fill="none" stroke="#222"/></svg></span>
            <span class="x">×</span>
          </div>
          <div class="btn">工程设置</div>
          <div class="btn">绘图输入</div>
          <div class="navtools">
            <svg class="i" viewBox="0 0 16 16"><path d="M0 4.500h8M4 .5v8M8 11.500h8M12 7.500v8" stroke="#06483f" stroke-width="2.200"/></svg>
            <svg class="i" viewBox="0 0 16 16"><path d="M0 4.500h8M8 11.500h8" stroke="#06483f" stroke-width="2.200"/></svg>
          </div>
          <div class="tree">
            <div class="troot">${this.navTree()}</div>
            <div class="sb">${this.scroll(50, 270, 123)}</div>
          </div>
          <div class="btn">单构件输入</div>
          <div class="btn">报表预览</div>
        </aside>

        <div class="work">
          <div class="row3">${strip(235, 1366, [
            [239, "i:addnew"], [259, "新建"], [286, "v"], [298, "i:del"], [318, "删除"], [348, "i:copy"], [369, "复制"], [400, "i:rename"], [420, "重命名"],
            [464, "|"], [466, "楼层"], [496, html`<span class="combo3">基础层</span>`], [548, "v"], [562, "|"], [567, "i:sort"], [588, "排序"], [614, "v"],
            [627, "i:filter"], [646, "过滤"], [673, "v"], [686, "|"], [692, "i:fromfl"], [712, "从其他楼层复制构件"], [828, "i:tofl"], [847, "复制构件到其他楼层"],
            [962, "|"], [970, "查找"], [997, "v"], [1010, "|"], [1016, "i:up"], [1036, "上移"], [1067, "i:down"], [1087, "~下移"],
          ])}</div>
          <div class="panes">
            <div class="list">
              <div class="search"><div class="in">搜索构件...</div><div class="go">${btmArrow}</div></div>
              <div class="lbox">${this.azList()}</div>
            </div>
            <section class="prop">
              <div class="tabs"><div class="tab">属性编辑</div></div>
              <div class="pbody">
                <div class="tbl">
                  <div class="hr"><div></div><div>属性名称</div><div class="val">属性值</div><div class="add">附加</div></div>
                  ${this.table()}
                </div>
                <div class="psb">${this.scroll(0, 301, 224)}</div>
              </div>
            </section>
          </div>
        </div>
      </div>

      <div class="status">
        <div style="width:148px"></div>
        <div style="width:76px">${t("层高:3.55m")}</div>
        <div style="width:97px">${t("底标高:-3.58m")}</div>
        <div style="width:47px">${t("0")}</div>
        <div style="flex:1"></div>
      </div>

      ${this.taskbar()}

      <svg class="oval" viewBox="0 0 176 84"><ellipse cx="87" cy="41" rx="80" ry="34" fill="none" stroke="#0000e0" stroke-width="7"/></svg>

      <div class="dlg">
        <div class="dt">截面编辑</div>
        <div class="db">
          <div class="t1">${strip(835, 1332, [
            [840, ":"], [848, "布角筋"], [894, "布边筋"], [940, "特殊布筋"], [998, "对齐钢筋"],
            [1051, html`<span class="box">画箍筋</span>`], [1100, "|"], [1108, "修改纵筋"], [1166, "修改箍筋"], [1224, "编辑弯钩"], [1318, ">>"],
          ])}</div>
          <div class="t2">${strip(835, 1332, [
            [840, ":"], [847, "钢筋信息"],
            [896, html`<span class="cmb">C8@100<span class="dd"><span class="caret"></span></span></span>`],
          ])}</div>
          <div class="canvas">
            ${this.cad()}
            <div class="flt">
              <div class="h">绘制箍筋</div>
              <div class="b">${strip(847, 1045, [
                [851, "矩形"], [881, html`<span class="box">直线</span>`], [920, "三点画弧"], [975, "v"],
                [986, html`<span class="cb2"><span class="caret g"></span></span>`],
              ])}</div>
            </div>
          </div>
        </div>
        <div class="ds">
          <div class="a">${t("(X: 391 Y: 400)")}</div>
          <div class="z">${t("请指定起点所在纵筋或网格交点，按右键终止或ESC键取消")}<span class="dots"></span></div>
        </div>
      </div>

      <div class="score">70</div>

      <div class="ime">${strip(1182, 1366, [
        [1182, sLogo], [1222, "英"], [1243, html`<span style="font:700 13px/12px 'Liberation Sans',sans-serif">',</span>`],
        [1258, html`<svg class="i" viewBox="0 0 16 16"><rect x="5.500" y="1" width="5" height="9" rx="2.500" fill="#1a6fc2"/><path d="M3.500 7v1a4.500 4.500 0 0 0 9 0V7M8 12.500V15M5.500 15h5" fill="none" stroke="#1a6fc2" stroke-width="1.300"/></svg>`],
        [1282, html`<svg class="i" viewBox="0 0 16 16"><rect x="0.500" y="3" width="15" height="10" rx="1.500" fill="#1a6fc2"/><path d="M2.500 5.500h11M2.500 8h11M2.500 10.500h11" stroke="#fff" stroke-dasharray="1.300 1"/></svg>`],
        [1301, html`<svg class="i" viewBox="0 0 16 16"><circle cx="7" cy="4" r="3" fill="#c4c8cc"/><path d="M2 14c0-4 2-6 5-6s5 2 5 6z" fill="#c4c8cc"/><rect x="8" y="10" width="8" height="6" fill="#d8dde2"/></svg>`],
        [1324, html`<svg class="i" viewBox="0 0 16 16"><path d="M5 1L1 4l2 3 2-1v9h6V6l2 1 2-3-4-3H9.500a1.500 1.500 0 0 1-3 0z" fill="#1a6fc2"/></svg>`],
        [1346, html`<svg class="i" viewBox="0 0 16 16"><path d="M1 15l7-8c-1-3 1-6 5-6l-2 3 1 2 2 1 2-2c0 4-3 6-6 5l-6 7z" fill="#1a6fc2"/></svg>`],
      ])}</div>
    `;
  }
}
